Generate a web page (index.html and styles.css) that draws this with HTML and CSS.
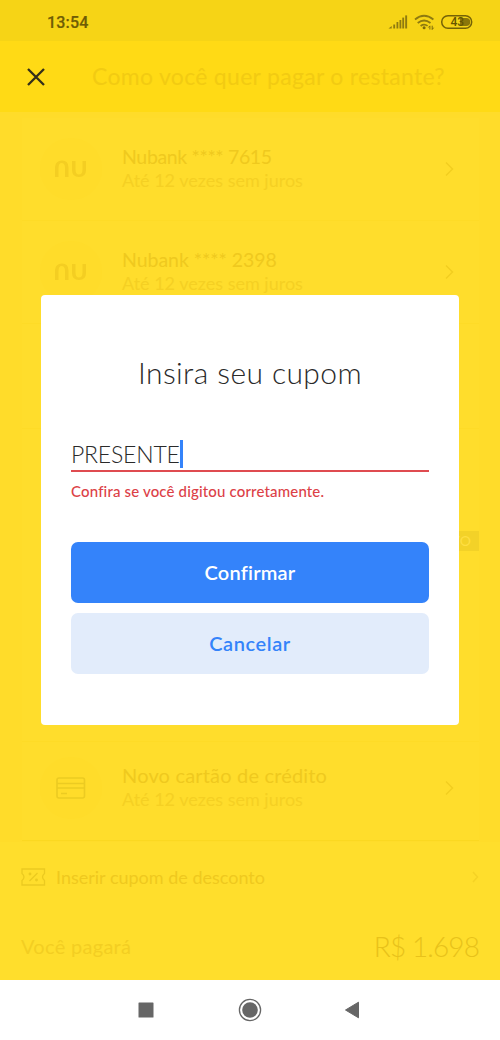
FILE: index.html
```html
<!DOCTYPE html>
<html lang="pt-BR">
<head>
<meta charset="utf-8">
<title>Pagamento</title>
<link rel="stylesheet" href="styles.css">
</head>
<body>
<div class="screen">
  <div class="status">
    <span class="clock">13:54</span>
    <svg class="status-icons" width="86" height="18" viewBox="0 0 86 18">
      <g fill="#8e7a10"><path d="M.5 14.500h3.200V12z"/><rect x="5.300" y="10.500" width="1.800" height="4"/><rect x="8.500" y="8" width="1.800" height="6.500"/><rect x="11.500" y="6" width="1.800" height="8.500"/><rect x="14.300" y="3.600" width="1.800" height="10.900"/><rect x="17.200" y="1.400" width="1.900" height="13.100"/></g>
      <g fill="none" stroke="#8e7a10" stroke-width="1.800"><path d="M27 5.500q9-7.400 18.400 0M29.700 9q6.400-5 12.800 0M32.600 11.900q3.600-2.600 7 0"/></g>
      <circle cx="36.100" cy="13.700" r="1.500" fill="#7e6b0c"/>
      <path d="M41.900 12v3.500m-1.500-2 1.500-1.700M44.200 11.700V15.500m1.400-1.800-1.400 1.800" fill="none" stroke="#7e6b0c"/>
      <rect x="53.700" y="1.700" width="30" height="12.600" rx="6.300" fill="none" stroke="#756307" stroke-width="1.500"/>
      <path d="M72 4h6.200a4 4 0 0 1 0 8H72z" fill="#8a760a"/>
      <text x="62.500" y="12" class="battery">43</text>
    </svg>
  </div>
  <header class="top">
    <svg width="20" height="20" viewBox="0 0 20 20"><path d="m2 2 16 16M18 2 2 18" stroke="#342f1a" stroke-width="2.300"/></svg>
    <span class="top-title">Como você quer pagar o restante?</span>
  </header>
  <main class="list">
    <div class="card">
      <div class="row">
        <div class="disc"><svg class="nu" width="32" height="18" viewBox="0 0 32 18"><path d="M0 17V7Q.5.500 7 .5t6.500 7V17h-3.500V8q0-5-3.500-5-2.800 0-3 5v9z"/><path d="M17 1h3.500v8.500q0 5 3.500 5t3.500-5V1H31v9q0 7-7 7t-7-7z"/></svg></div>
        <div class="label"><span class="name n1">Nubank **** 7615</span><span class="sub">Até 12 vezes sem juros</span></div>
        <svg class="chev" width="9" height="16" viewBox="0 0 9 16"><path d="m1 1.500 6.500 6.500L1 14.500"/></svg>
      </div>
      <div class="row">
        <div class="disc"><svg class="nu" width="32" height="18" viewBox="0 0 32 18"><path d="M0 17V7Q.5.500 7 .5t6.500 7V17h-3.500V8q0-5-3.500-5-2.800 0-3 5v9z"/><path d="M17 1h3.500v8.500q0 5 3.500 5t3.500-5V1H31v9q0 7-7 7t-7-7z"/></svg></div>
        <div class="label"><span class="name n2">Nubank **** 2398</span><span class="sub">Até 12 vezes sem juros</span></div>
        <svg class="chev" width="9" height="16" viewBox="0 0 9 16"><path d="m1 1.500 6.500 6.500L1 14.500"/></svg>
      </div>
      <div class="row tall"></div>
      <div class="row flagged"><span class="flag">NOVO</span></div>
      <div class="row last">
        <div class="disc"><svg width="30" height="22" viewBox="0 0 30 22" fill="none" stroke="#eccb22" stroke-width="1.600"><rect x="1" y="1" width="27.500" height="20" rx="2"/><path d="M1 6.500h27.500M1 11h27.500M5 16.500h6"/></svg></div>
        <div class="label"><span class="name n3">Novo cartão de crédito</span><span class="sub">Até 12 vezes sem juros</span></div>
        <svg class="chev" width="9" height="16" viewBox="0 0 9 16"><path d="m1 1.500 6.500 6.500L1 14.500"/></svg>
      </div>
    </div>
  </main>
  <footer class="summary">
    <div class="line coupon">
      <svg width="25" height="18" viewBox="0 0 25 18" fill="none" stroke="#ebca20" stroke-width="1.300"><path d="M1 1h22.500v4.500q-4 3.500 0 7V17H1v-4.500q4-3.500 0-7zM8.500 13l8-8"/><circle cx="9" cy="6" r=".8"/><circle cx="15.500" cy="12" r=".8"/></svg>
      <span class="coupon-text">Inserir cupom de desconto</span>
      <svg class="chev-s" width="7" height="12" viewBox="0 0 7 12"><path d="m1 1 4.500 5L1 11"/></svg>
    </div>
    <div class="line total"><span class="pay">Você pagará</span><span class="amount">R$ 1.698</span></div>
  </footer>
  <nav class="nav">
    <svg width="16" height="16" viewBox="0 0 16 16"><rect x=".5" y=".5" width="15" height="15" rx=".6" fill="#666"/></svg>
    <svg width="24" height="24" viewBox="0 0 24 24"><circle cx="12" cy="12" r="10.600" fill="none" stroke="#666" stroke-width="1.300"/><circle cx="12" cy="12" r="7.800" fill="#666"/></svg>
    <svg width="16" height="18" viewBox="0 0 16 18"><path d="M1.500 9 14.500 1.200v15.600z" fill="#666" stroke="#666" stroke-linejoin="round"/></svg>
  </nav>
  <section class="modal">
    <h1 class="title"><span>Insira seu cupom</span></h1>
    <div class="field"><span class="value">PRESENTE</span><span class="caret"></span></div>
    <p class="error">Confira se você digitou corretamente.</p>
    <button class="btn primary"><span>Confirmar</span></button>
    <button class="btn secondary"><span>Cancelar</span></button>
  </section>
</div>
</body>
</html>
```
FILE: styles.css
```css
* { box-sizing: border-box; }
body { margin: 0; font-family: Lato, "Open Sans", sans-serif; }
svg { display: block; flex: none; }
span { white-space: nowrap; }
.screen { position: relative; width: 500px; height: 1040px; display: flex; flex-direction: column; overflow: hidden; background: #ffdd2b; }
.status { height: 41px; flex: none; display: flex; align-items: center; justify-content: space-between; padding: 4px 26px 0 47px; background: #f6d416; }
.clock { font: 500 16px/20px Roboto, sans-serif; color: #6f5c05; letter-spacing: .2px; -webkit-text-stroke: .2px #6f5c05; }
.battery { font: 500 12px Roboto, sans-serif; fill: #665500; }
.top { height: 71px; flex: none; display: flex; align-items: center; gap: 46px; padding-left: 26px; background: #ffda15; }
.top-title { font-size: 23px; letter-spacing: .3px; color: #f2cb12; padding-bottom: 2px; }
.list { height: 730px; flex: none; padding: 6px 21px 0 22px; background: #ffdc2a; }
.card { height: 723px; background: #ffdd2c; border-bottom: 1px solid #fbd821; }
.row { height: 103px; display: flex; align-items: center; border-bottom: 1px solid #fedb27; padding: 0 25px 0 18px; }
.tall { height: 105px; }
.flagged { height: 313px; padding: 0; align-items: flex-start; justify-content: flex-end; }
.flag { width: 58px; height: 20px; margin-top: 102px; text-align: right; padding-right: 8px; font: 14px/20px Lato, sans-serif; background: #f3d228; color: #ffdf42; }
.last { border: 0; height: 92px; }
.disc { width: 62px; height: 62px; border-radius: 50%; background: #ffdc2a; display: flex; align-items: center; justify-content: center; }
.nu { fill: #f4ce22; }
.label { display: flex; flex-direction: column; margin-left: 20px; flex: 1; padding-bottom: 3px; }
.name { font-size: 20px; line-height: 25px; color: #efc91e; }
.n1 { font-size: 19.5px; letter-spacing: -.35px; }
.n2 { font-size: 19.5px; letter-spacing: -.03px; }
.n3 { letter-spacing: .18px; }
.sub { font-size: 18px; line-height: 22px; color: #f5d023; }
.chev, .chev-s { fill: none; stroke: #f2ce20; stroke-width: 1.500; }
.chev-s { stroke: #f5d225; }
.summary { height: 138px; flex: none; padding: 0 21px; background: #ffde2c; }
.line { height: 70px; display: flex; align-items: center; }
.coupon { gap: 10px; }
.coupon-text { flex: 1; font-size: 18px; color: #efc91e; padding-bottom: 1px; }
.total { justify-content: space-between; height: 68px; }
.pay { font-size: 20px; letter-spacing: .3px; color: #f3ce22; padding-bottom: 1px; }
.amount { font-size: 28px; font-weight: 300; letter-spacing: -.9px; color: #e8c21a; padding-bottom: 1px; }
.nav { height: 60px; flex: none; display: flex; align-items: center; padding-left: 138px; gap: 84px; background: #fff; }
.nav svg:last-child { margin-left: -2px; }
.modal { position: absolute; left: 41px; top: 295px; width: 418px; height: 430px; padding: 58px 30px 0; border-radius: 4px; background: #fff; }
.title { margin: 0; height: 38px; line-height: 38px; font-size: 30px; font-weight: 300; letter-spacing: .4px; color: #2a2a2a; text-align: center; }
.field { height: 81px; display: flex; align-items: flex-end; border-bottom: 2px solid #df4b50; padding-bottom: 2px; }
.value { font-size: 23px; line-height: 27px; font-weight: 300; letter-spacing: -.2px; color: #2a2a2a; }
.caret { width: 3px; height: 28px; background: #3483fa; }
.error { margin: 9px 0 0; height: 20px; line-height: 20px; font-size: 15px; font-weight: 500; letter-spacing: .16px; color: #dc4147; }
.btn { display: block; width: 358px; height: 61px; border: 0; border-radius: 7px; padding: 0 0 2px; font: 600 20px/24px Lato, sans-serif; letter-spacing: .2px; }
.primary { margin-top: 41px; background: #3483fa; color: #fff; }
.secondary { margin-top: 10px; background: #e2ecfb; color: #3483fa; letter-spacing: .6px; }
```
